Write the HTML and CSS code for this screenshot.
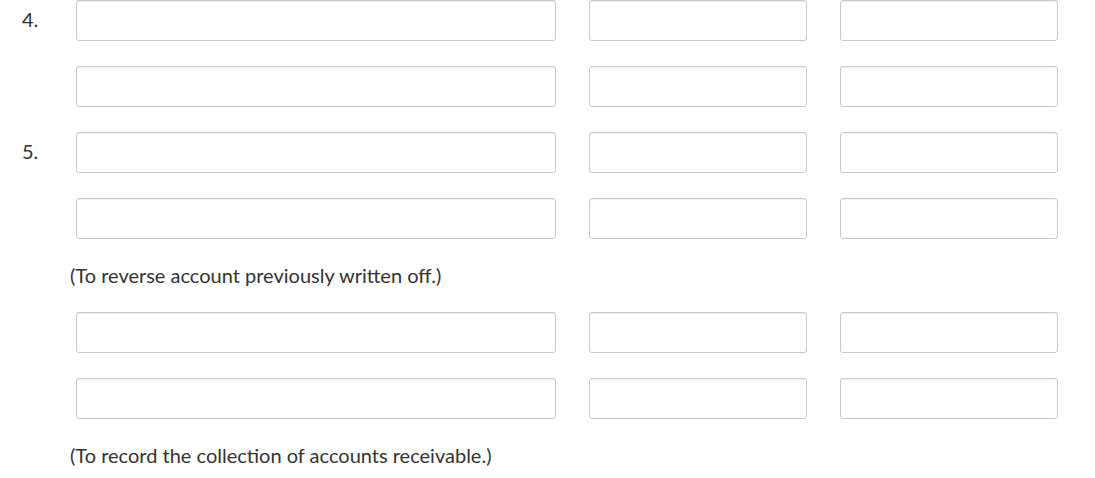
FILE: index.html
```html
<!DOCTYPE html>
<html>
<head>
<meta charset="utf-8">
<link rel="stylesheet" href="styles.css">
</head>
<body>
<div class="sheet">
  <div class="row"><div class="label">4.</div><div class="field f1"></div><div class="field f2"></div><div class="field f3"></div></div>
  <div class="row"><div class="label"></div><div class="field f1"></div><div class="field f2"></div><div class="field f3"></div></div>
  <div class="row"><div class="label">5.</div><div class="field f1"></div><div class="field f2"></div><div class="field f3"></div></div>
  <div class="row"><div class="label"></div><div class="field f1"></div><div class="field f2"></div><div class="field f3"></div></div>
  <div class="note">(To reverse account previously written off.)</div>
  <div class="row"><div class="label"></div><div class="field f1"></div><div class="field f2"></div><div class="field f3"></div></div>
  <div class="row"><div class="label"></div><div class="field f1"></div><div class="field f2"></div><div class="field f3"></div></div>
  <div class="note">(To record the collection of accounts receivable.)</div>
</div>
</body>
</html>
```
FILE: styles.css
```css
html, body {
  margin: 0;
  padding: 0;
  background: #fff;
}
body {
  font-family: Lato, "Open Sans", sans-serif;
  font-size: 20px;
  color: #333;
}
.sheet {
  display: flex;
  flex-direction: column;
}
.row {
  display: flex;
  align-items: center;
  height: 41px;
  margin-bottom: 25px;
}
.label {
  width: 76px;
  box-sizing: border-box;
  padding-left: 22px;
  margin-bottom: 4px;
  line-height: 24px;
  flex: none;
}
.field {
  height: 41px;
  box-sizing: border-box;
  border: 1px solid #c9c9c9;
  border-radius: 3px;
  box-shadow: inset 0 1px 1px rgba(0,0,0,0.05);
  background: #fff;
  flex: none;
}
.f1 { width: 480px; margin-right: 33px; }
.f2 { width: 218px; margin-right: 33px; }
.f3 { width: 218px; }
.note {
  padding-left: 70px;
  line-height: 24px;
  height: 24px;
  margin-top: -1px;
  margin-bottom: 25px;
}
```
